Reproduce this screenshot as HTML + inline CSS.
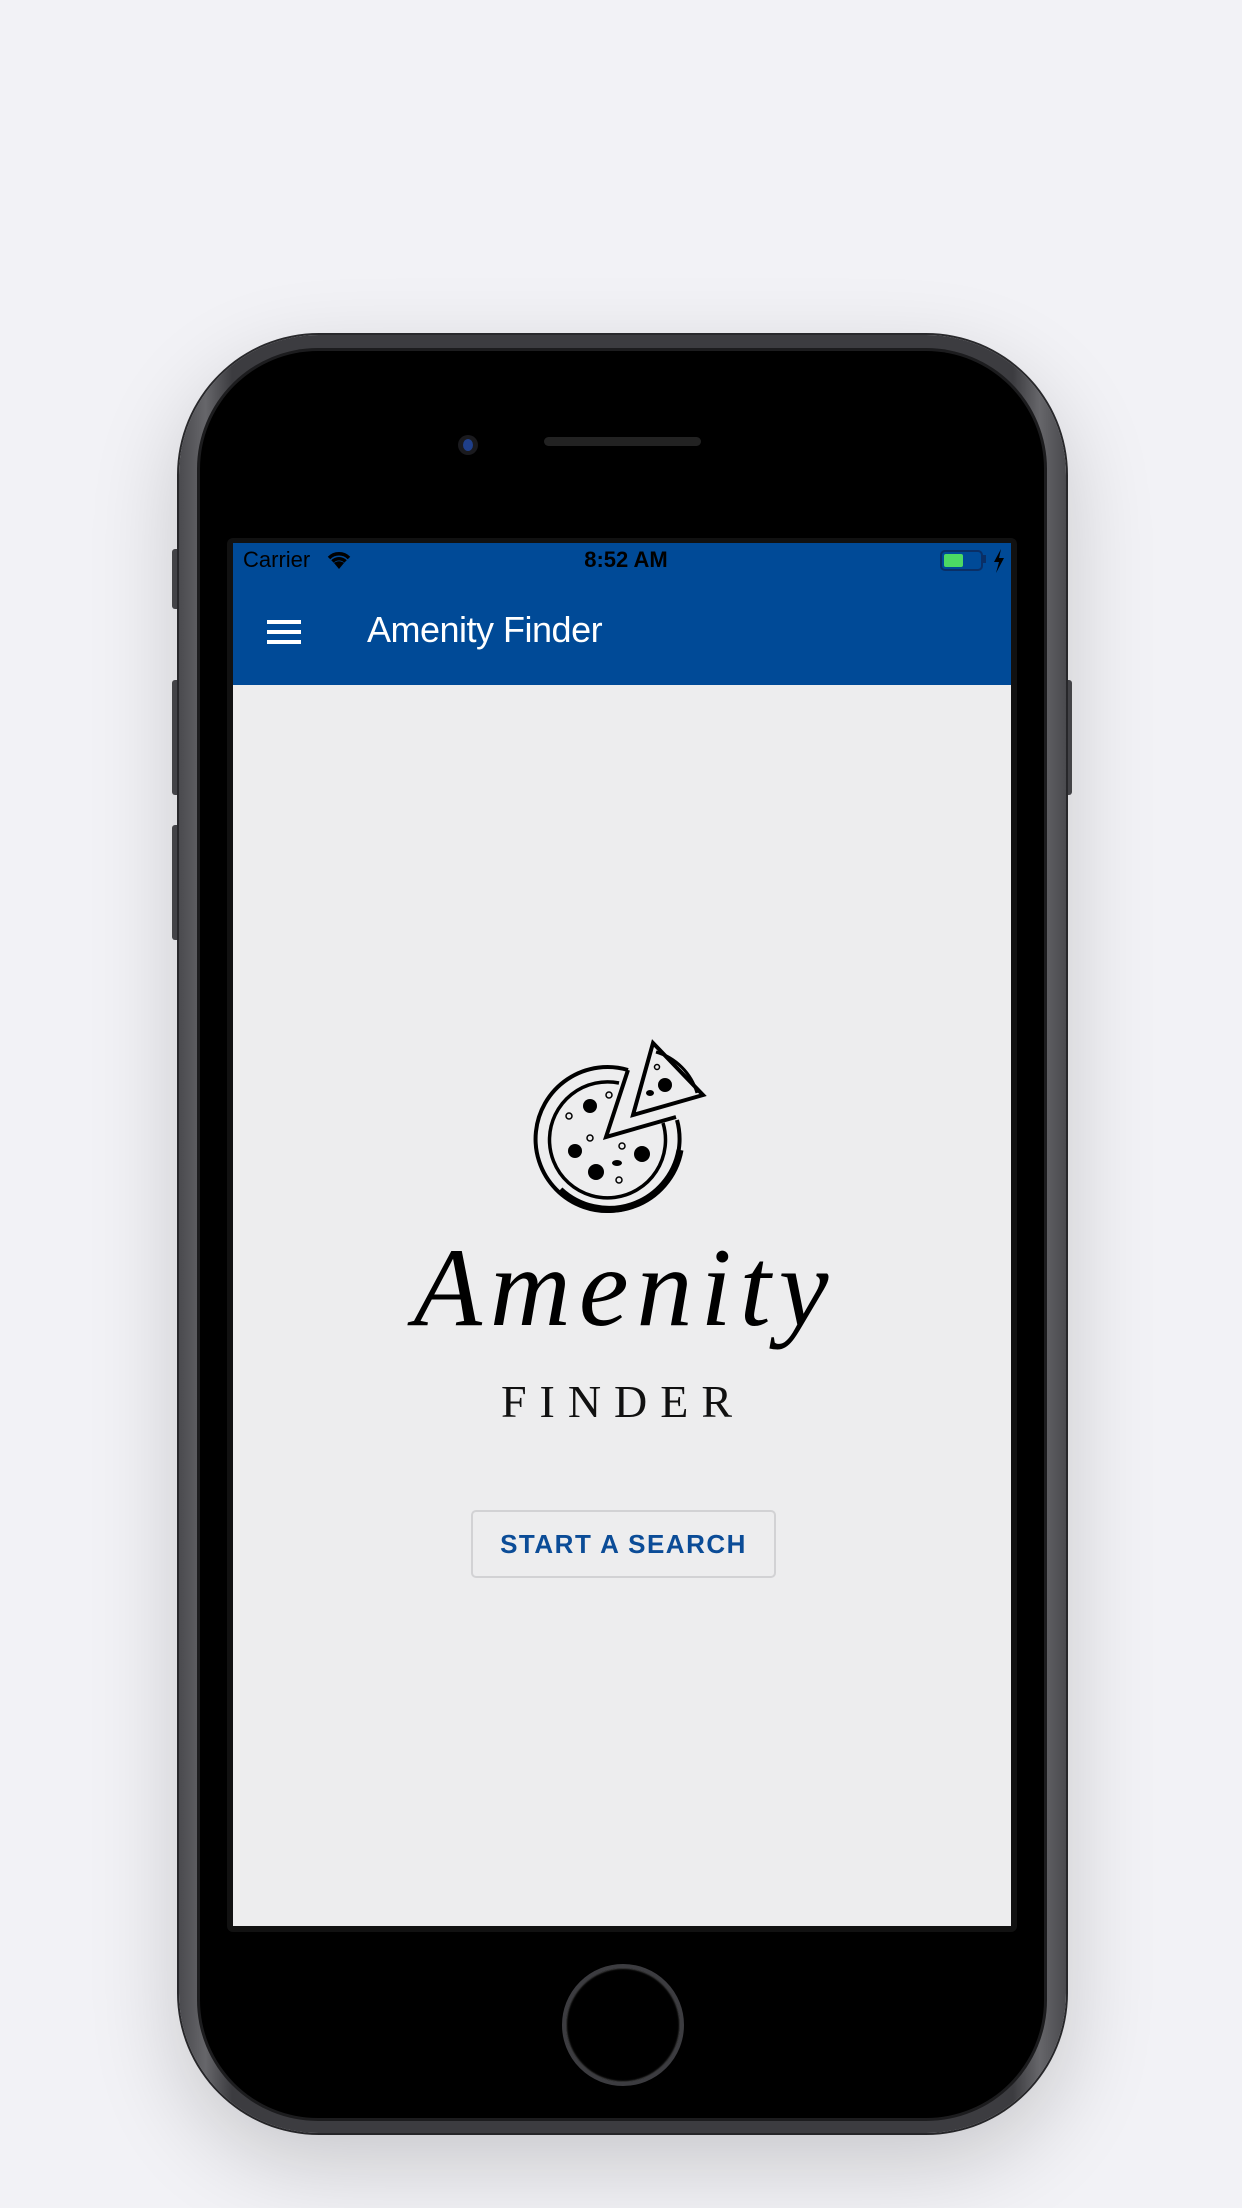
<!DOCTYPE html>
<html><head><meta charset="utf-8"><style>
html,body{margin:0;padding:0}
body{width:1242px;height:2208px;background:#f2f2f6;position:relative;overflow:hidden;font-family:"Liberation Sans",sans-serif}
.abs{position:absolute}
.phone{left:179px;top:335px;width:887px;height:1798px;border-radius:140px;background:linear-gradient(90deg,#4a4a4e,#66666a 3%,#3c3c40 6%,#3c3c40 94%,#66666a 97%,#4a4a4e);box-shadow:0 30px 90px rgba(0,0,0,.18),0 0 0 2px #2b2b2e}
.bezel{left:200px;top:351px;width:844px;height:1767px;border-radius:118px;background:#000;box-shadow:0 0 0 3px #1c1c1e}
.frame{left:227px;top:538px;width:790px;height:1394px;background:#111;border-radius:6px}
.screen{left:233px;top:543px;width:778px;height:1383px;background:#ededee}
.bar{left:233px;top:543px;width:778px;height:142px;background:#004a97}
.btn{background:#4a4a4e;border-radius:3px}
</style></head><body>
<div class="abs btn" style="left:172px;top:549px;width:9px;height:60px"></div>
<div class="abs btn" style="left:172px;top:680px;width:9px;height:115px"></div>
<div class="abs btn" style="left:172px;top:825px;width:9px;height:115px"></div>
<div class="abs btn" style="left:1064px;top:680px;width:8px;height:115px"></div>
<div class="abs phone"></div>
<div class="abs bezel"></div>
<div class="abs" style="left:458px;top:435px;width:20px;height:20px;border-radius:50%;background:#1a1a1e"></div>
<div class="abs" style="left:463px;top:439px;width:10px;height:12px;border-radius:50%;background:#1f3f8a"></div>
<div class="abs" style="left:544px;top:437px;width:157px;height:9px;border-radius:5px;background:#222"></div>
<div class="abs frame"></div>
<div class="abs screen"></div>
<div class="abs bar"></div>
<div class="abs" style="left:243px;top:547px;font-size:22px;color:#000">Carrier</div>
<svg class="abs" style="left:325px;top:550px" width="28" height="20" viewBox="0 0 28 20"><path d="M14 19 L9 13 A8 8 0 0 1 19 13 Z" fill="#000"/><path d="M4 8 A14 14 0 0 1 24 8" stroke="#000" stroke-width="3.5" fill="none"/><path d="M7.5 11.5 A9 9 0 0 1 20.5 11.5" stroke="#000" stroke-width="3.5" fill="none"/></svg>
<div class="abs" style="left:526px;top:547px;width:200px;text-align:center;font-size:22px;font-weight:bold;color:#000">8:52 AM</div>
<div class="abs" style="left:940px;top:550px;width:39px;height:17px;border:2px solid #0a2f66;border-radius:5px"></div>
<div class="abs" style="left:944px;top:554px;width:19px;height:13px;background:#4cd964;border-radius:2px"></div>
<div class="abs" style="left:983px;top:555px;width:3px;height:8px;background:#0a2f66"></div>
<svg class="abs" style="left:992px;top:549px" width="14" height="24" viewBox="0 0 14 24"><path d="M9 0 L2 13 H7 L4 24 L12 9 H7 Z" fill="#000"/></svg>
<div class="abs" style="left:267px;top:620px;width:34px;height:4px;background:#fff"></div>
<div class="abs" style="left:267px;top:630px;width:34px;height:4px;background:#fff"></div>
<div class="abs" style="left:267px;top:640px;width:34px;height:4px;background:#fff"></div>
<div class="abs" style="left:367px;top:609px;font-size:36px;font-weight:500;color:#fff;letter-spacing:-0.5px">Amenity Finder</div>
<svg class="abs" style="left:530px;top:1035px" width="190" height="185" viewBox="530 1035 190 185">
<g fill="none" stroke="#000">
<path d="M628 1070 A72 72 0 1 0 677 1120" stroke-width="4"/>
<path d="M560 1190 A72 72 0 0 0 680 1150" stroke-width="7"/>
<path d="M619 1083 A58 58 0 1 0 663 1123" stroke-width="3.5"/>
<path d="M628 1070 L606 1137 L676 1117" stroke-width="4"/>
<path d="M653 1043 L703 1095 L633 1115 Z" stroke-width="4"/>
<path d="M656 1052 A60 60 0 0 1 697 1093" stroke-width="3"/>
</g>
<g fill="#000"><circle cx="590" cy="1106" r="7"/><circle cx="575" cy="1151" r="7"/><circle cx="596" cy="1172" r="8"/><circle cx="642" cy="1154" r="8"/><circle cx="665" cy="1085" r="7"/><ellipse cx="617" cy="1163" rx="5" ry="3"/><ellipse cx="650" cy="1093" rx="4" ry="3"/></g>
<g fill="none" stroke="#000" stroke-width="1.5"><circle cx="609" cy="1095" r="3"/><circle cx="569" cy="1116" r="3"/><circle cx="590" cy="1138" r="3"/><circle cx="622" cy="1146" r="3"/><circle cx="619" cy="1180" r="3"/><circle cx="657" cy="1067" r="2.5"/></g>
</svg>
<div class="abs" style="left:390px;top:1233px;width:470px;line-height:110px;text-align:center;font-family:'Liberation Serif',cursive;font-style:italic;font-size:112px;font-weight:normal;color:#000;letter-spacing:8px">Amenity</div>
<div class="abs" style="left:470px;top:1375px;width:280px;text-align:center;font-family:'Liberation Serif',serif;font-size:46px;letter-spacing:13px;color:#111;padding-left:13px">FINDER</div>
<div class="abs" style="left:471px;top:1510px;width:301px;height:64px;border:2px solid #d2d2d4;border-radius:5px;text-align:center;line-height:64px;font-size:26px;font-weight:bold;color:#0b4c97;letter-spacing:1.5px">START A SEARCH</div>
<div class="abs" style="left:562px;top:1964px;width:114px;height:114px;border-radius:50%;border:4px solid #3c3c40;box-shadow:inset 0 0 2px #888"></div>
</body></html>
